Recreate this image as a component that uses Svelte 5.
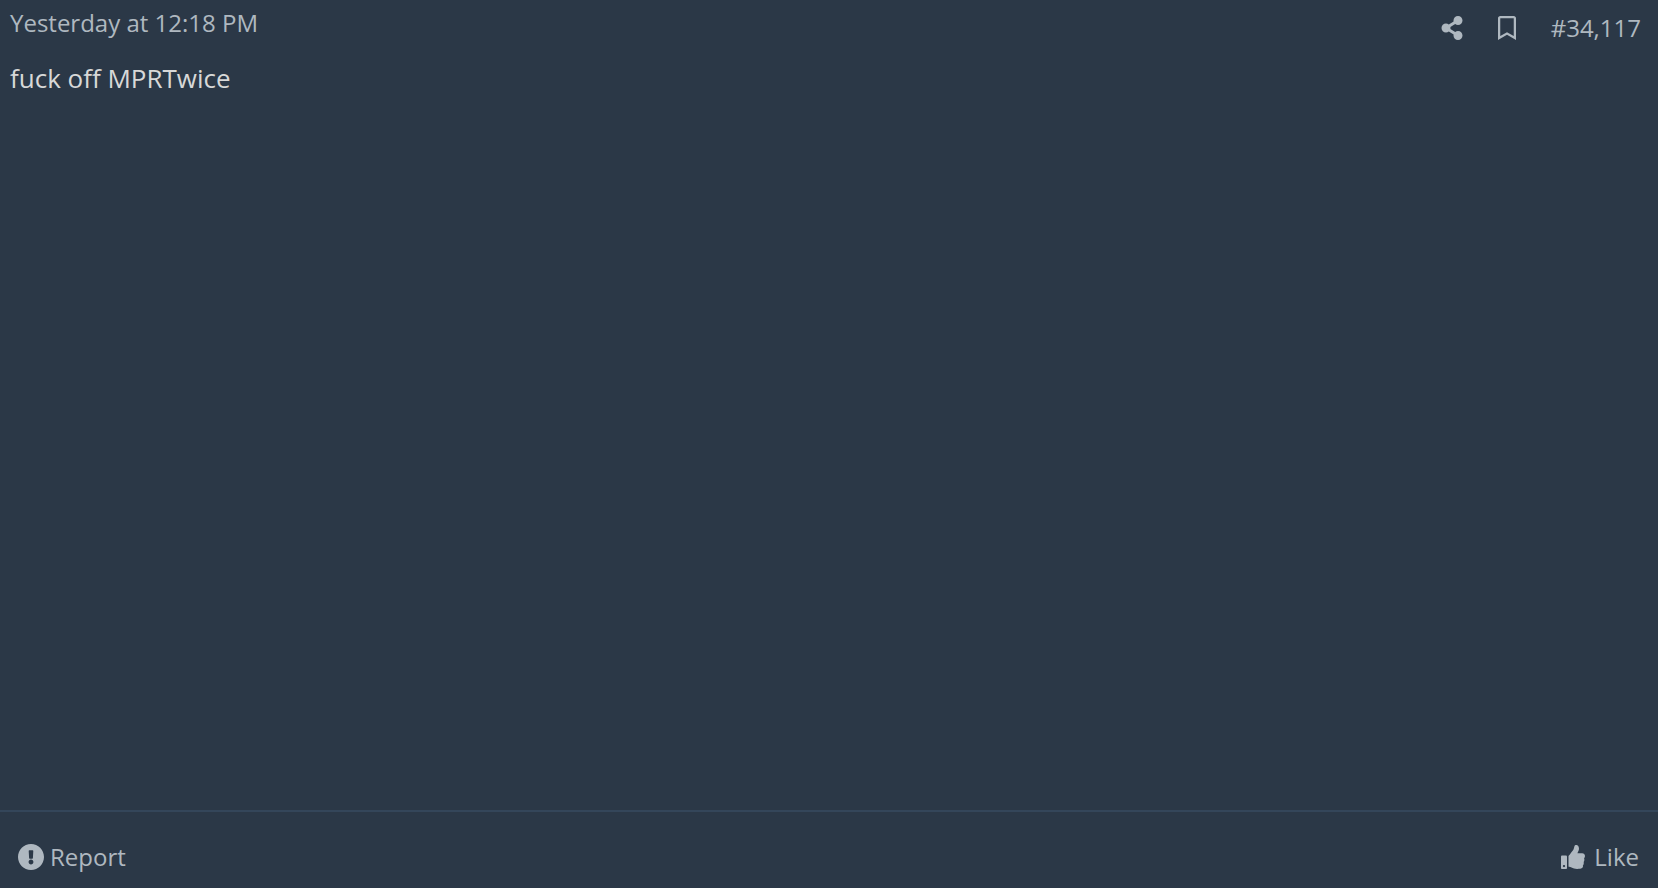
<script lang="ts">
    let bookmarked = $state(false);
    let liked = $state(false);
</script>

<article class="post">
    <header class="post-header">
        <a class="date" href="#post"><time>Yesterday at 12:18 PM</time></a>
        <div class="actions">
            <button class="icon-button" type="button" aria-label="Share">
                <svg class="share-icon" viewBox="0 0 448 512" aria-hidden="true">
                    <path d="M352 320c-22.608 0-43.387 7.819-59.79 20.895l-102.486-64.054a96.551 96.551 0 0 0 0-41.683l102.486-64.054C308.613 184.181 329.392 192 352 192c53.019 0 96-42.981 96-96S405.019 0 352 0s-96 42.981-96 96c0 7.158.79 14.13 2.276 20.841L155.79 180.895C139.387 167.819 118.608 160 96 160c-53.019 0-96 42.981-96 96s42.981 96 96 96c22.608 0 43.387-7.819 59.79-20.895l102.486 64.054A96.301 96.301 0 0 0 256 416c0 53.019 42.981 96 96 96s96-42.981 96-96-42.981-96-96-96z" />
                </svg>
            </button>
            <button
                class="icon-button"
                type="button"
                aria-label="Bookmark"
                aria-pressed={bookmarked}
                onclick={() => (bookmarked = !bookmarked)}
            >
                <svg class="bookmark-icon" viewBox="0 0 384 512" aria-hidden="true">
                    <path d="M336 0H48C21.490 0 0 21.490 0 48v464l192-112 192 112V48c0-26.510-21.490-48-48-48zm0 428.430l-144-84-144 84V54a6 6 0 0 1 6-6h276c3.314 0 6 2.683 6 5.996V428.430z" />
                </svg>
            </button>
            <a class="number" href="#post">#34,117</a>
        </div>
    </header>

    <div class="message">fuck off MPRTwice</div>

    <footer class="post-footer">
        <button class="footer-button" type="button">
            <svg class="report-icon" viewBox="8 8 496 496" aria-hidden="true">
                <path d="M504 256c0 136.997-111.043 248-248 248S8 392.997 8 256C8 119.083 119.043 8 256 8s248 111.083 248 248zm-248 50c-25.405 0-46 20.595-46 46s20.595 46 46 46 46-20.595 46-46-20.595-46-46-46zm-43.673-165.346l7.418 136c.347 6.364 5.609 11.346 11.982 11.346h48.546c6.373 0 11.635-4.982 11.982-11.346l7.418-136c.375-6.874-5.098-12.654-11.982-12.654h-63.383c-6.884 0-12.356 5.780-11.981 12.654z" />
            </svg>
            Report
        </button>
        <button class="footer-button like" type="button" aria-pressed={liked} onclick={() => (liked = !liked)}>
            <svg class="like-icon" viewBox="0 0 512 512" aria-hidden="true">
                <path d="M104 224H24c-13.255 0-24 10.745-24 24v240c0 13.255 10.745 24 24 24h80c13.255 0 24-10.745 24-24V248c0-13.255-10.745-24-24-24zM64 472c-13.255 0-24-10.745-24-24s10.745-24 24-24 24 10.745 24 24-10.745 24-24 24zM384 81.452c0 42.416-25.970 66.208-33.277 94.548h101.723c33.397 0 59.397 27.746 59.553 58.098.084 17.938-7.546 37.249-19.439 49.197l-.11.110c9.836 23.337 8.237 56.037-9.308 79.469 8.681 25.895-.069 57.704-16.382 74.757 4.298 17.598 2.244 32.575-6.148 44.632C440.202 511.587 389.616 512 346.839 512l-2.845-.001c-48.287-.017-87.806-17.598-119.560-31.725-15.957-7.099-36.821-15.887-52.651-16.178-6.540-.120-11.783-5.457-11.783-11.998v-213.770c0-3.200 1.282-6.271 3.558-8.521 39.614-39.144 56.648-80.587 89.117-113.111 14.804-14.832 20.188-37.236 25.393-58.902C282.515 39.293 291.817 0 312 0c24 0 72 8 72 81.452z" />
            </svg>
            Like
        </button>
    </footer>
</article>

<style>
    :global(body) {
        margin: 0;
        background-color: #2b3847;
    }

    .post {
        display: flex;
        flex-direction: column;
        box-sizing: border-box;
        min-height: 100vh;
        padding-top: 6px;
        background-color: #2b3847;
        color: #afb8c0;
        font-family: "Open Sans", sans-serif;
        font-size: 24px;
        line-height: 34px;
    }

    .post-header {
        display: flex;
        justify-content: space-between;
        align-items: flex-start;
        padding: 0 17px 0 10px;
    }

    .date,
    .number {
        color: inherit;
        text-decoration: none;
    }

    .actions {
        display: flex;
        align-items: center;
        gap: 35px;
        padding-top: 5px;
    }

    button {
        display: flex;
        align-items: center;
        padding: 0;
        border: none;
        background: none;
        color: inherit;
        font: inherit;
        cursor: pointer;
    }

    svg {
        display: block;
        height: 24px;
        fill: currentColor;
    }

    .share-icon {
        width: 22px;
    }

    .bookmark-icon {
        width: 18px;
    }

    .message {
        flex: 1;
        padding: 16px 10px;
        color: #d8d8d8;
        font-size: 26px;
    }

    .post-footer {
        display: flex;
        justify-content: space-between;
        padding: 28px 19px 14px 18px;
        border-top: 2px solid #34465a;
    }

    .footer-button {
        gap: 6px;
    }

    .footer-button.like {
        gap: 9px;
    }

    .report-icon {
        width: 26px;
        height: 26px;
    }

    .like-icon {
        width: 24px;
    }
</style>
